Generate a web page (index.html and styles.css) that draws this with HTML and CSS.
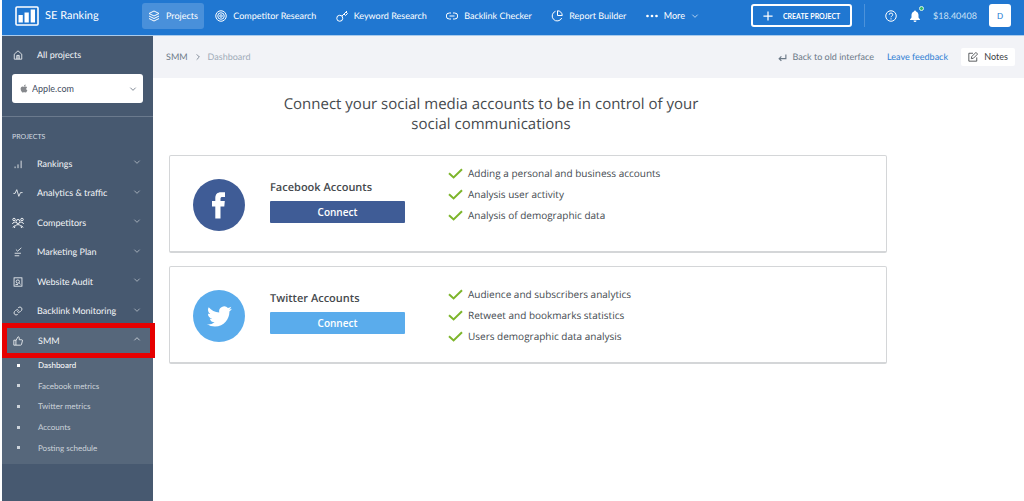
FILE: index.html
```html
<!DOCTYPE html>
<html lang="en">
<head>
<meta charset="utf-8">
<meta name="viewport" content="width=device-width, initial-scale=1">
<title>SE Ranking - SMM Dashboard</title>
<link rel="stylesheet" href="styles.css">
</head>
<body>
<svg class="sprite" aria-hidden="true">
  <symbol id="chevron" viewBox="0 0 12 12"><path d="M2 4l4 4 4-4"/></symbol>
  <symbol id="check" viewBox="0 0 15 11"><path d="M1 5.200l4.600 4.200L14 1.200"/></symbol>
</svg>
<header class="topbar">
  <a class="brand" href="#">
    <svg class="brand-logo" viewBox="0 0 24 20"><rect x="1" y="1" width="22" height="18" rx="1" fill="none" stroke="#fff" stroke-width="1.600"/><path fill="#fff" stroke="none" d="M3.500 9h4.300v7.500H3.500zM9.500 6.500h4.300v10H9.500zM15.700 3.500H20v13h-4.300z"/></svg>
    <span>SE Ranking</span>
  </a>
  <nav class="topnav" aria-label="Main">
    <a class="topnav-item is-active" href="#"><svg class="icon" viewBox="0 0 24 24"><path d="M12 2L2 7l10 5 10-5zM2 12l10 5 10-5M2 17l10 5 10-5"/></svg>Projects</a>
    <a class="topnav-item" href="#"><svg class="icon" viewBox="0 0 24 24"><circle cx="12" cy="12" r="10.500"/><circle cx="12" cy="12" r="6.500"/><circle cx="12" cy="12" r="2.500"/></svg>Competitor Research</a>
    <a class="topnav-item" href="#"><svg class="icon" viewBox="0 0 24 24"><circle cx="7.500" cy="16.500" r="6"/><path d="M12 12L22 2M16 8l3 3 4-4-3-3"/></svg>Keyword Research</a>
    <a class="topnav-item" href="#"><svg class="icon" viewBox="0 0 24 24"><path d="M10 6H6.500a6 6 0 000 12H10M14 6h3.500a6 6 0 010 12H14M7 12h10"/></svg>Backlink Checker</a>
    <a class="topnav-item" href="#"><svg class="icon" viewBox="0 0 24 24"><path d="M9 2.500A10 10 0 1021.500 16M13 1.500V11h9.500A9.500 9.500 0 0013 1.500z"/></svg>Report Builder</a>
    <button class="topnav-item" type="button"><svg class="icon" viewBox="0 0 24 24"><g fill="#fff" stroke="none"><circle cx="3" cy="12" r="2.700"/><circle cx="12" cy="12" r="2.700"/><circle cx="21" cy="12" r="2.700"/></g></svg>More<svg class="chev"><use href="#chevron"/></svg></button>
  </nav>
  <div class="account">
    <button class="create" type="button"><svg class="icon" viewBox="0 0 24 24"><path d="M12 1v22M1 12h22"/></svg>CREATE PROJECT</button>
    <div class="account-tools">
      <button class="tool" type="button" aria-label="Help"><svg class="icon" viewBox="0 0 24 24"><circle cx="12" cy="12" r="10.500"/><path d="M8.500 9.500a3.500 3.500 0 117 0c0 2.500-3.500 2.500-3.500 5M12 16.500v2.500"/></svg></button>
      <button class="tool" type="button" aria-label="Notifications"><svg class="icon" viewBox="0 0 24 24"><path fill="#fff" stroke="none" d="M12 1a2 2 0 00-2 2c-3.500 1-5 4-5 7v5l-3 4v1h20v-1l-3-4v-5c0-3-1.500-6-5-7a2 2 0 00-2-2zM9 21h6a3 3 0 01-6 0z"/></svg><span class="dot"></span></button>
      <span class="balance">$18.40408</span>
      <button class="avatar" type="button">D</button>
    </div>
  </div>
</header>
<div class="layout">
  <aside class="sidebar">
    <a class="side-item" href="#"><svg class="icon" viewBox="0 0 24 24"><path d="M3 10l9-8 9 8v12H3zM9 22v-9h6v9M12 13v9"/></svg>All projects</a>
    <div class="project">
      <svg class="project-logo" viewBox="3 2 18 20"><path d="M17.050 20.280c-.98.95-2.050.8-3.080.35-1.090-.46-2.090-.48-3.240 0-1.440.62-2.200.44-3.060-.35C2.790 15.250 3.510 7.590 9.050 7.310c1.350.07 2.290.74 3.080.8 1.180-.24 2.310-.93 3.570-.84 1.510.12 2.650.72 3.400 1.800-3.120 1.870-2.380 5.980.48 7.130-.57 1.500-1.310 2.990-2.540 4.090zM12.030 7.250c-.15-2.230 1.660-4.070 3.740-4.250.29 2.580-2.340 4.500-3.740 4.250z"/></svg>
      <select class="project-select" aria-label="Project"><option>Apple.com</option></select>
      <svg class="chev project-chev"><use href="#chevron"/></svg>
    </div>
    <h2 class="side-title">PROJECTS</h2>
    <ul class="side-list">
      <li><a class="side-item" href="#"><svg class="icon" viewBox="0 0 24 24"><path d="M5 22v-4M12 22v-9M19.500 22V4"/></svg>Rankings<svg class="chev"><use href="#chevron"/></svg></a></li>
      <li><a class="side-item" href="#"><svg class="icon" viewBox="0 0 24 24"><path d="M1 13h4l4-9 5 16 4-9h5"/></svg>Analytics &amp; traffic<svg class="chev"><use href="#chevron"/></svg></a></li>
      <li><a class="side-item" href="#"><svg class="icon wide" viewBox="0 0 24 24"><circle cx="12" cy="9" r="4"/><circle cx="4" cy="5" r="2.500"/><circle cx="20" cy="5" r="2.500"/><path d="M5 22c0-9 14-9 14 0M1 14c1-4 4-4 6-3M23 14c-1-4-4-4-6-3M2 21l3-4M22 21l-3-4"/></svg>Competitors<svg class="chev"><use href="#chevron"/></svg></a></li>
      <li><a class="side-item" href="#"><svg class="icon" viewBox="0 0 24 24"><path d="M7 6l4 4 9-8M4 15h15M4 21h11"/></svg>Marketing Plan<svg class="chev"><use href="#chevron"/></svg></a></li>
      <li><a class="side-item" href="#"><svg class="icon" viewBox="0 0 24 24"><rect x="2.500" y="2" width="19" height="20"/><circle cx="11.500" cy="11" r="4"/><path d="M14.500 14l3.500 3.500M6 18h6"/></svg>Website Audit<svg class="chev"><use href="#chevron"/></svg></a></li>
      <li><a class="side-item" href="#"><svg class="icon" viewBox="0 0 24 24"><path d="M10 13a5 5 0 007.500.5l3-3a5 5 0 00-7-7l-1.700 1.700M14 11a5 5 0 00-7.500-.5l-3 3a5 5 0 007 7l1.700-1.700"/></svg>Backlink Monitoring<svg class="chev"><use href="#chevron"/></svg></a></li>
    </ul>
    <div class="side-group">
      <a class="side-item is-open" href="#"><svg class="icon" viewBox="0 0 24 24"><path d="M2 10h5v12H2zM7 11l5-9c3 0 3 2 3 3v4h6c1.500 0 2 1 1.500 3l-2 8c-.3 1.500-1 2-2.500 2H7"/></svg>SMM<svg class="chev up"><use href="#chevron"/></svg></a>
      <ul class="sub-list">
        <li><a class="sub-item is-current" href="#">Dashboard</a></li>
        <li><a class="sub-item" href="#">Facebook metrics</a></li>
        <li><a class="sub-item" href="#">Twitter metrics</a></li>
        <li><a class="sub-item" href="#">Accounts</a></li>
        <li><a class="sub-item" href="#">Posting schedule</a></li>
      </ul>
      <div class="highlight"></div>
    </div>
  </aside>
  <div class="page">
    <div class="subbar">
      <nav class="crumbs" aria-label="Breadcrumb"><a href="#">SMM</a><svg class="chev right"><use href="#chevron"/></svg><span class="crumb-now">Dashboard</span></nav>
      <div class="actions">
        <a class="back" href="#"><svg class="icon" viewBox="0 0 24 24"><path d="M21 4v11H4M9 9l-6 6 6 6"/></svg>Back to old interface</a>
        <a class="feedback" href="#">Leave feedback</a>
        <button class="notes" type="button"><svg class="icon" viewBox="0 0 24 24"><path d="M12 3H2v19h19V13M8 16l1-5 10-10 4 4-10 10z"/></svg>Notes</button>
      </div>
    </div>
    <main class="content">
      <h1 class="headline">Connect your social media accounts to be in control of your social communications</h1>
      <section class="card">
        <svg class="social" viewBox="0 0 52 52"><circle cx="26" cy="26" r="26" fill="#3f5c96"/><path fill="#fff" d="M22.300 39.500V27.500H19V22h3.300v-2.700c0-4 2-6 5.700-6h4V18h-2.500c-1.500 0-2 .6-2 1.800V22h4.300l-.5 5.500h-3.800v12z"/></svg>
        <div class="connect"><h2 class="card-title">Facebook Accounts</h2><button class="btn btn-facebook" type="button">Connect</button></div>
        <ul class="features features-top">
          <li><svg class="check"><use href="#check"/></svg>Adding a personal and business accounts</li>
          <li><svg class="check"><use href="#check"/></svg>Analysis user activity</li>
          <li><svg class="check"><use href="#check"/></svg>Analysis of demographic data</li>
        </ul>
      </section>
      <section class="card">
        <svg class="social" viewBox="0 0 52 52"><circle cx="26" cy="26" r="26" fill="#5aacec"/><path fill="#fff" transform="translate(14 14) scale(1.040)" d="M23.953 4.570a10 10 0 01-2.825.775 4.958 4.958 0 002.163-2.723c-.951.555-2.005.959-3.127 1.184a4.920 4.920 0 00-8.384 4.482C7.690 8.095 4.067 6.130 1.640 3.162a4.822 4.822 0 00-.666 2.475c0 1.710.87 3.213 2.188 4.096a4.904 4.904 0 01-2.228-.616v.06a4.923 4.923 0 003.946 4.827 4.996 4.996 0 01-2.212.085 4.936 4.936 0 004.604 3.417 9.867 9.867 0 01-6.102 2.105c-.39 0-.779-.023-1.170-.067a13.995 13.995 0 007.557 2.209c9.053 0 13.998-7.496 13.998-13.985 0-.21 0-.42-.015-.63A9.935 9.935 0 0024 4.590z"/></svg>
        <div class="connect"><h2 class="card-title">Twitter Accounts</h2><button class="btn btn-twitter" type="button">Connect</button></div>
        <ul class="features">
          <li><svg class="check"><use href="#check"/></svg>Audience and subscribers analytics</li>
          <li><svg class="check"><use href="#check"/></svg>Retweet and bookmarks statistics</li>
          <li><svg class="check"><use href="#check"/></svg>Users demographic data analysis</li>
        </ul>
      </section>
    </main>
  </div>
</div>
</body>
</html>
```
FILE: styles.css
```css
* { box-sizing: border-box; }
body {
  margin: 0;
  padding-left: 2px;
  min-height: 100vh;
  display: flex;
  flex-direction: column;
  background: #fff;
  color: #444a50;
  font: 9px/14px Lato, "Open Sans", sans-serif;
  text-rendering: geometricPrecision;
}
a { color: inherit; text-decoration: none; }
button { font: inherit; color: inherit; background: none; border: 0; padding: 0; cursor: pointer; }
ul { list-style: none; margin: 0; padding: 0; }
h1, h2 { margin: 0; font-weight: 400; }
svg { flex: none; fill: none; stroke: currentColor; stroke-width: 2; }
.sprite { position: absolute; width: 0; height: 0; }
.icon { width: 12px; height: 12px; }
.chev { width: 8px; height: 8px; }
.chev.up { transform: rotate(180deg); }
.chev.right { transform: rotate(-90deg); }

.topbar {
  display: flex;
  align-items: center;
  justify-content: space-between;
  height: 36px;
  padding: 0 13px 4px;
  background: #2077d1;
  border-bottom: 1px solid #a9cbed;
  color: #fff;
}
.brand { display: flex; align-items: center; gap: 6px; width: 127px; font-size: 11px; }
.brand-logo { width: 24px; height: 20px; }
.topnav { display: flex; flex: 1; justify-content: space-between; max-width: 557px; }
.topnav-item { display: flex; align-items: center; gap: 6px; height: 26px; white-space: nowrap; }
.topnav-item.is-active { padding: 0 6px; margin-right: -8px; border-radius: 3px; background: #4990da; }
.topnav-item .chev { stroke-width: 1; }
.account { display: flex; align-items: center; gap: 12px; margin-left: auto; }
.create {
  display: flex;
  align-items: center;
  justify-content: center;
  gap: 10px;
  width: 101px;
  height: 23px;
  border: 2px solid #fff;
  border-radius: 3px;
  font-size: 7px;
  font-weight: 700;
}
.create .icon { width: 10px; height: 10px; stroke-width: 3; }
.account-tools { display: flex; align-items: center; gap: 12px; padding-left: 20px; border-left: 1px solid #4c92da; }
.tool { position: relative; display: flex; }
.dot { position: absolute; top: -4px; right: -3px; width: 5px; height: 5px; border: 1px solid #d9f4e8; border-radius: 50%; background: #35b96b; }
.balance { color: #cde2f6; }
.avatar { width: 22px; height: 23px; border-radius: 3px; background: #fff; color: #2077d1; font-size: 8px; }

.layout { display: flex; flex: 1; }
.sidebar { width: 151px; background: #475970; color: #f4f6f8; padding-top: 9px; }
.side-item { display: flex; align-items: center; gap: 13px; padding: 0 12px 0 10px; height: 20px; white-space: nowrap; }
.side-item .icon { width: 12px; height: 10px; }
.side-item .icon.wide { height: 12px; }
.side-item .chev { margin-left: auto; margin-bottom: 3px; color: #d0d6dd; stroke-width: 1; }
.project { position: relative; margin: 9px 10px 13px; }
.project-select {
  display: block;
  width: 100%;
  height: 29px;
  padding: 0 20px;
  border: 0;
  border-radius: 3px;
  background: #fff;
  color: #3f4c5e;
  font: inherit;
  appearance: none;
}
.project-logo { position: absolute; left: 8px; top: 10px; width: 8px; height: 9px; fill: #85888c; stroke: none; }
.project-chev { position: absolute; right: 6px; top: 11px; color: #3f4c5e; stroke-width: 1; }
.side-title { padding: 13px 10px 5px; border-top: 1px solid #6b7a8d; color: #d3d9e0; font-size: 7px; }
.side-list { display: grid; grid-auto-rows: 1fr; min-height: 177px; align-items: center; }
.side-group { position: relative; background: #56677b; padding-bottom: 6px; }
.side-item.is-open { height: 29px; gap: 14px; }
.side-item.is-open .chev { color: #f4f6f8; }
.sub-list { display: grid; grid-auto-rows: 1fr; min-height: 103px; align-items: center; }
.sub-item { display: flex; align-items: center; gap: 18px; padding-left: 15px; color: #ccd3da; font-size: 8px; }
.sub-item::before { content: ""; width: 3px; height: 3px; background: currentColor; }
.sub-item.is-current { color: #fff; }
.highlight { position: absolute; top: -3px; left: 0; right: -2px; height: 35px; border: 5px solid #e60000; pointer-events: none; }

.page { flex: 1; min-width: 0; }
.subbar { display: flex; align-items: center; justify-content: space-between; height: 42px; padding: 0 9px 0 13px; background: #f2f3f7; color: #6c7987; }
.crumbs { display: flex; align-items: center; gap: 6px; }
.crumbs .chev { color: #4b5a6c; stroke-width: 1; }
.crumb-now { color: #a0abb7; }
.actions { display: flex; align-items: center; gap: 13px; }
.back { display: flex; align-items: center; gap: 6px; }
.back .icon { width: 9px; height: 9px; stroke-width: 3; }
.feedback { color: #2f80d4; }
.notes { display: flex; align-items: center; justify-content: center; gap: 6px; width: 54px; height: 18px; border-radius: 2px; background: #fff; color: #3c4043; }
.notes .icon { width: 10px; height: 10px; stroke-width: 2; }

.content { display: flex; flex-direction: column; gap: 13px; max-width: 734px; padding: 16px 0 16px 16px; font-family: "Open Sans", "Noto Sans", sans-serif; }
.headline { max-width: 420px; margin: 0 0 8px 112px; font-size: 15px; line-height: 20px; text-align: center; color: #45494d; }
.card { display: flex; align-items: center; gap: 25px; min-height: 98px; padding: 7px 23px 5px; border: 1px solid #d4d6d8; border-bottom-width: 2px; border-radius: 2px; }
.social { width: 52px; height: 52px; stroke: none; }
.connect { width: 135px; padding-bottom: 7px; }
.card-title { margin-bottom: 5px; font-size: 11px; line-height: 16px; font-weight: 600; color: #45494d; }
.btn { display: block; width: 100%; height: 22px; border-radius: 1px; color: #fff; font-size: 10px; font-weight: 600; }
.btn-facebook { background: #3f5c96; }
.btn-twitter { background: #5aacec; }
.features { margin-left: 18px; font-size: 10px; line-height: 21px; }
.features li { display: flex; align-items: center; gap: 5px; }
.features-top { align-self: flex-start; }
.check { width: 15px; height: 11px; color: #7db52b; stroke-width: 2; }
```
